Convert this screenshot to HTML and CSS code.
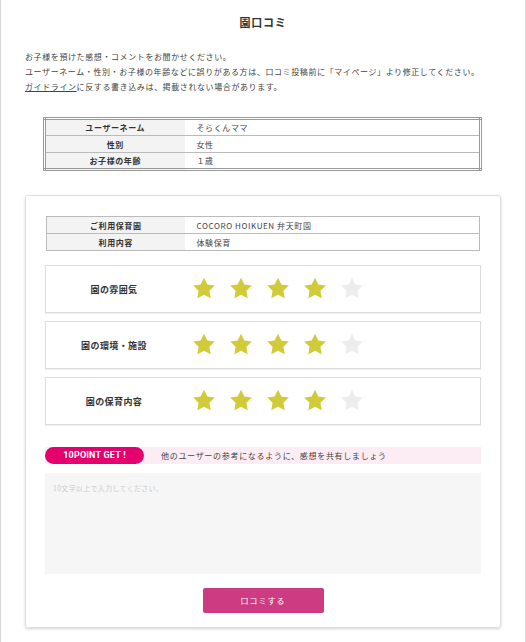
FILE: index.html
```html
<!DOCTYPE html>
<html lang="ja">
<head>
<meta charset="utf-8">
<title>園口コミ</title>
<link rel="stylesheet" href="styles.css">
</head>
<body>
<div class="page">
  <h1 class="title">園口コミ</h1>
  <div class="intro">
    <p>お子様を預けた感想・コメントをお聞かせください。</p>
    <p>ユーザーネーム・性別・お子様の年齢などに誤りがある方は、口コミ投稿前に「マイページ」より修正してください。</p>
    <p><a class="link" href="#">ガイドライン</a>に反する書き込みは、掲載されない場合があります。</p>
  </div>

  <table class="info info-double">
    <tr><th>ユーザーネーム</th><td>そらくんママ</td></tr>
    <tr><th>性別</th><td>女性</td></tr>
    <tr><th>お子様の年齢</th><td>１歳</td></tr>
  </table>

  <div class="card">
    <table class="info info-single">
      <tr><th>ご利用保育園</th><td>COCORO HOIKUEN 弁天町園</td></tr>
      <tr><th>利用内容</th><td>体験保育</td></tr>
    </table>

    <div class="ratings">
      <div class="rating">
        <div class="rating-label">園の雰囲気</div>
        <div class="stars">
          <svg class="star on" viewBox="0 0 24 24"><path d="M12 1.5l3.09 6.26L22 8.77l-5 4.87 1.18 6.88L12 17.27l-6.18 3.25L7 13.64 2 8.77l6.91-1.01z"/></svg>
          <svg class="star on" viewBox="0 0 24 24"><path d="M12 1.5l3.09 6.26L22 8.77l-5 4.87 1.18 6.88L12 17.27l-6.18 3.25L7 13.64 2 8.77l6.91-1.01z"/></svg>
          <svg class="star on" viewBox="0 0 24 24"><path d="M12 1.5l3.09 6.26L22 8.77l-5 4.87 1.18 6.88L12 17.27l-6.18 3.25L7 13.64 2 8.77l6.91-1.01z"/></svg>
          <svg class="star on" viewBox="0 0 24 24"><path d="M12 1.5l3.09 6.26L22 8.77l-5 4.87 1.18 6.88L12 17.27l-6.18 3.25L7 13.64 2 8.77l6.91-1.01z"/></svg>
          <svg class="star off" viewBox="0 0 24 24"><path d="M12 1.5l3.09 6.26L22 8.77l-5 4.87 1.18 6.88L12 17.27l-6.18 3.25L7 13.64 2 8.77l6.91-1.01z"/></svg>
        </div>
      </div>
      <div class="rating">
        <div class="rating-label">園の環境・施設</div>
        <div class="stars">
          <svg class="star on" viewBox="0 0 24 24"><path d="M12 1.5l3.09 6.26L22 8.77l-5 4.87 1.18 6.88L12 17.27l-6.18 3.25L7 13.64 2 8.77l6.91-1.01z"/></svg>
          <svg class="star on" viewBox="0 0 24 24"><path d="M12 1.5l3.09 6.26L22 8.77l-5 4.87 1.18 6.88L12 17.27l-6.18 3.25L7 13.64 2 8.77l6.91-1.01z"/></svg>
          <svg class="star on" viewBox="0 0 24 24"><path d="M12 1.5l3.09 6.26L22 8.77l-5 4.87 1.18 6.88L12 17.27l-6.18 3.25L7 13.64 2 8.77l6.91-1.01z"/></svg>
          <svg class="star on" viewBox="0 0 24 24"><path d="M12 1.5l3.09 6.26L22 8.77l-5 4.87 1.18 6.88L12 17.27l-6.18 3.25L7 13.64 2 8.77l6.91-1.01z"/></svg>
          <svg class="star off" viewBox="0 0 24 24"><path d="M12 1.5l3.09 6.26L22 8.77l-5 4.87 1.18 6.88L12 17.27l-6.18 3.25L7 13.64 2 8.77l6.91-1.01z"/></svg>
        </div>
      </div>
      <div class="rating">
        <div class="rating-label">園の保育内容</div>
        <div class="stars">
          <svg class="star on" viewBox="0 0 24 24"><path d="M12 1.5l3.09 6.26L22 8.77l-5 4.87 1.18 6.88L12 17.27l-6.18 3.25L7 13.64 2 8.77l6.91-1.01z"/></svg>
          <svg class="star on" viewBox="0 0 24 24"><path d="M12 1.5l3.09 6.26L22 8.77l-5 4.87 1.18 6.88L12 17.27l-6.18 3.25L7 13.64 2 8.77l6.91-1.01z"/></svg>
          <svg class="star on" viewBox="0 0 24 24"><path d="M12 1.5l3.09 6.26L22 8.77l-5 4.87 1.18 6.88L12 17.27l-6.18 3.25L7 13.64 2 8.77l6.91-1.01z"/></svg>
          <svg class="star on" viewBox="0 0 24 24"><path d="M12 1.5l3.09 6.26L22 8.77l-5 4.87 1.18 6.88L12 17.27l-6.18 3.25L7 13.64 2 8.77l6.91-1.01z"/></svg>
          <svg class="star off" viewBox="0 0 24 24"><path d="M12 1.5l3.09 6.26L22 8.77l-5 4.87 1.18 6.88L12 17.27l-6.18 3.25L7 13.64 2 8.77l6.91-1.01z"/></svg>
        </div>
      </div>
    </div>

    <div class="points">
      <span class="pill">10POINT GET !</span>
      <span class="points-text">他のユーザーの参考になるように、感想を共有しましょう</span>
    </div>

    <textarea class="comment" placeholder="10文字以上で入力してください。"></textarea>

    <div class="actions">
      <button class="submit" type="button">口コミする</button>
    </div>
  </div>
</div>
</body>
</html>
```

FILE: styles.css
```css
* { box-sizing: border-box; }

html, body {
  margin: 0;
  padding: 0;
  background: #fff;
}

body {
  font-family: "Noto Sans CJK JP", "Noto Sans", sans-serif;
  color: #333;
}

.page {
  width: 526px;
  min-height: 642px;
  border-left: 1px solid #d8d8d8;
  border-right: 1px solid #d8d8d8;
  padding: 14px 24px 20px;
}

.title {
  margin: 0;
  text-align: center;
  font-size: 11px;
  line-height: 16px;
  letter-spacing: 0.8px;
  font-weight: 700;
  color: #333;
}

.intro {
  margin-top: 19px;
  font-size: 8px;
  line-height: 15px;
  letter-spacing: 0.6px;
  color: #444;
}

.intro p {
  margin: 0;
  height: 15px;
}

.link {
  color: #444;
  text-decoration: underline;
}

.info {
  border-collapse: collapse;
  font-size: 8px;
  letter-spacing: 0.6px;
  color: #444;
}

.info th,
.info td {
  height: 17px;
  padding: 0;
  border: 1px solid #bbb;
  line-height: 15px;
}

.info th {
  background: #f3f3f3;
  font-weight: 700;
  text-align: center;
  color: #333;
  border-right: none;
}

.info td {
  text-align: left;
  padding-left: 12px;
  border-left: none;
}

.info-double {
  width: 439px;
  margin: 23px 0 0 18px;
  border: 3px double #999;
}

.info-double th { width: 140px; }

.card {
  margin-top: 24px;
  border: 1px solid #e0e0e0;
  border-radius: 3px;
  box-shadow: 0 1px 3px rgba(0, 0, 0, 0.18);
  padding: 20px 19px 14px 19px;
}

.info-single {
  width: 434px;
  margin-left: 1px;
  border: 1px solid #aaa;
}

.info-single th { width: 138px; }

.ratings {
  margin-top: 14px;
  display: flex;
  flex-direction: column;
  gap: 8px;
}

.rating {
  height: 48px;
  border: 1px solid #dcdcdc;
  box-shadow: 0 1px 1px rgba(0, 0, 0, 0.06);
  display: flex;
  align-items: center;
}

.rating-label {
  width: 136px;
  text-align: center;
  font-size: 9px;
  font-weight: 700;
  letter-spacing: 0.4px;
  color: #333;
}

.stars {
  margin-left: 9px;
  display: flex;
  gap: 11px;
}

.star {
  width: 26px;
  height: 26px;
  display: block;
}

.star.on { fill: #d1cb3a; }
.star.off { fill: #ededed; }

.points {
  margin-top: 22px;
  height: 17px;
  display: flex;
  align-items: center;
  background: #fcecf4;
}

.pill {
  width: 99px;
  height: 17px;
  border-radius: 9px;
  background: #e4006e;
  color: #fff;
  font-family: "Roboto", "Noto Sans CJK JP", sans-serif;
  font-weight: 700;
  font-size: 9px;
  letter-spacing: 0.2px;
  line-height: 17px;
  text-align: center;
}

.points-text {
  margin-left: 17px;
  font-size: 8px;
  letter-spacing: 0.7px;
  color: #444;
}

.comment {
  display: block;
  width: 100%;
  height: 101px;
  margin-top: 9px;
  border: none;
  background: #f6f6f6;
  resize: none;
  padding: 10px 8px;
  font-family: "Noto Sans CJK JP", sans-serif;
  font-size: 7px;
  letter-spacing: 0.3px;
}

.comment::placeholder { color: #ccc; }

.actions {
  margin-top: 14px;
  display: flex;
  justify-content: center;
}

.submit {
  width: 121px;
  height: 25px;
  border: none;
  border-radius: 2px;
  background: #cd3b82;
  color: #fff;
  font-family: "Noto Sans CJK JP", sans-serif;
  font-size: 8px;
  letter-spacing: 1px;
  cursor: pointer;
}
```
